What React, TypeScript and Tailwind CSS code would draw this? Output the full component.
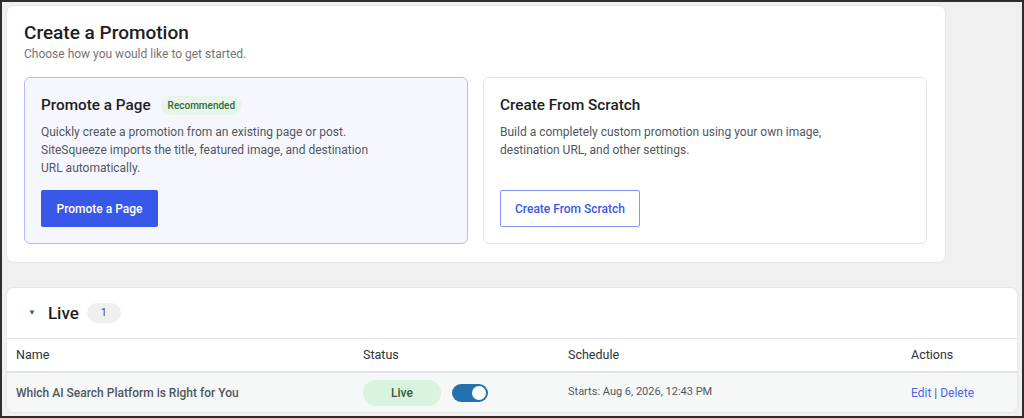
import React from "react";

const font = { fontFamily: 'Roboto, "Noto Sans", sans-serif' };

function OptionCard({
  highlighted,
  title,
  badge,
  lines,
  button,
}: {
  highlighted?: boolean;
  title: string;
  badge?: string;
  lines: string[];
  button: React.ReactNode;
}) {
  return (
    <div
      className={
        "flex flex-col rounded-[6px] border px-[16px] pt-[15px] " +
        (highlighted ? "border-[#b4bdfb] bg-[#f6f7fe]" : "border-[#e4e4e4] bg-white")
      }
    >
      <div className="flex items-center gap-[10px] h-[24px]">
        <span className="text-[15.3px] leading-[24px] font-medium text-[#1e1e1e]">{title}</span>
        {badge && (
          <span className="rounded-full bg-[#e7f5ea] px-[7px] h-[19px] flex items-center text-[10px] font-medium text-[#2f6b3c]">
            {badge}
          </span>
        )}
      </div>
      <div className="mt-[6px] h-[60px] text-[12px] leading-[18px] text-[#50575e]">
        {lines.map((l, i) => (
          <div key={i}>{l}</div>
        ))}
      </div>
      <div className="mt-[7px]">{button}</div>
    </div>
  );
}

export default function App() {
  return (
    <div
      style={font}
      className="w-[1024px] h-[418px] box-border border-2 border-[#2e2e2e] bg-[#f0f0f0] overflow-hidden"
    >
      <div className="ml-[4px] mt-[3px] w-[940px] h-[258px] box-border rounded-[8px] border border-[#e6e6e6] bg-white px-[17px] pt-[14px]">
        <div className="text-[19px] leading-[26px] font-medium text-[#1e1e1e]">Create a Promotion</div>
        <div className="text-[12px] leading-[18px] text-[#757575] -mt-[1px]">
          Choose how you would like to get started.
        </div>
        <div className="mt-[14px] grid grid-cols-[444px_444px] gap-[15px] h-[167px]">
          <OptionCard
            highlighted
            title="Promote a Page"
            badge="Recommended"
            lines={[
              "Quickly create a promotion from an existing page or post.",
              "SiteSqueeze imports the title, featured image, and destination",
              "URL automatically.",
            ]}
            button={
              <button className="h-[37px] w-[117px] rounded-[2px] bg-[#3858e9] text-[12px] font-medium text-white">
                Promote a Page
              </button>
            }
          />
          <OptionCard
            title="Create From Scratch"
            lines={[
              "Build a completely custom promotion using your own image,",
              "destination URL, and other settings.",
            ]}
            button={
              <button className="h-[37px] w-[140px] rounded-[2px] border border-[#8396f5] bg-white text-[12px] font-medium text-[#3858e9]">
                Create From Scratch
              </button>
            }
          />
        </div>
      </div>

      <div className="ml-[4px] mt-[24px] w-[1012px] h-[126px] box-border rounded-[8px] border border-[#e6e6e6] bg-white overflow-hidden">
        <div className="h-[50px] flex items-center pl-[21px]">
          <span className="text-[8px] text-[#50575e] mr-[12px]">▼</span>
          <span className="text-[17px] font-medium text-[#1e1e1e] leading-[24px]">Live</span>
          <span className="ml-[8px] h-[20px] w-[34px] rounded-full bg-[#f0f0f0] flex items-center justify-center text-[11px] text-[#50575e]">
            1
          </span>
        </div>
        <div className="border-t border-[#e6e6e6] h-[33px] grid grid-cols-[347px_205px_343px_1fr] pl-[9px] items-center text-[12.5px] text-[#2c3338]">
          <div>Name</div>
          <div>Status</div>
          <div>Schedule</div>
          <div>Actions</div>
        </div>
        <div className="border-t-2 border-[#e2e4e7] h-[41px] bg-[#f6f7f7] grid grid-cols-[347px_205px_343px_1fr] pl-[9px] items-center">
          <div className="text-[12px] font-medium text-[#50575e]">Which AI Search Platform is Right for You</div>
          <div className="flex items-center">
            <span className="h-[26px] w-[78px] rounded-full bg-[#d8f3de] flex items-center justify-center text-[12px] font-medium text-[#3d5a45]">
              Live
            </span>
            <span className="ml-[11px] h-[18px] w-[36px] rounded-full bg-[#2271b1] flex items-center justify-end pr-[2px]">
              <span className="h-[14px] w-[14px] rounded-full bg-white" />
            </span>
          </div>
          <div className="text-[11px] text-[#50575e]">Starts: Aug 6, 2026, 12:43 PM</div>
          <div className="text-[12px] text-[#4a67ec]">
            Edit <span className="text-[#50575e]">|</span> Delete
          </div>
        </div>
      </div>
    </div>
  );
}
